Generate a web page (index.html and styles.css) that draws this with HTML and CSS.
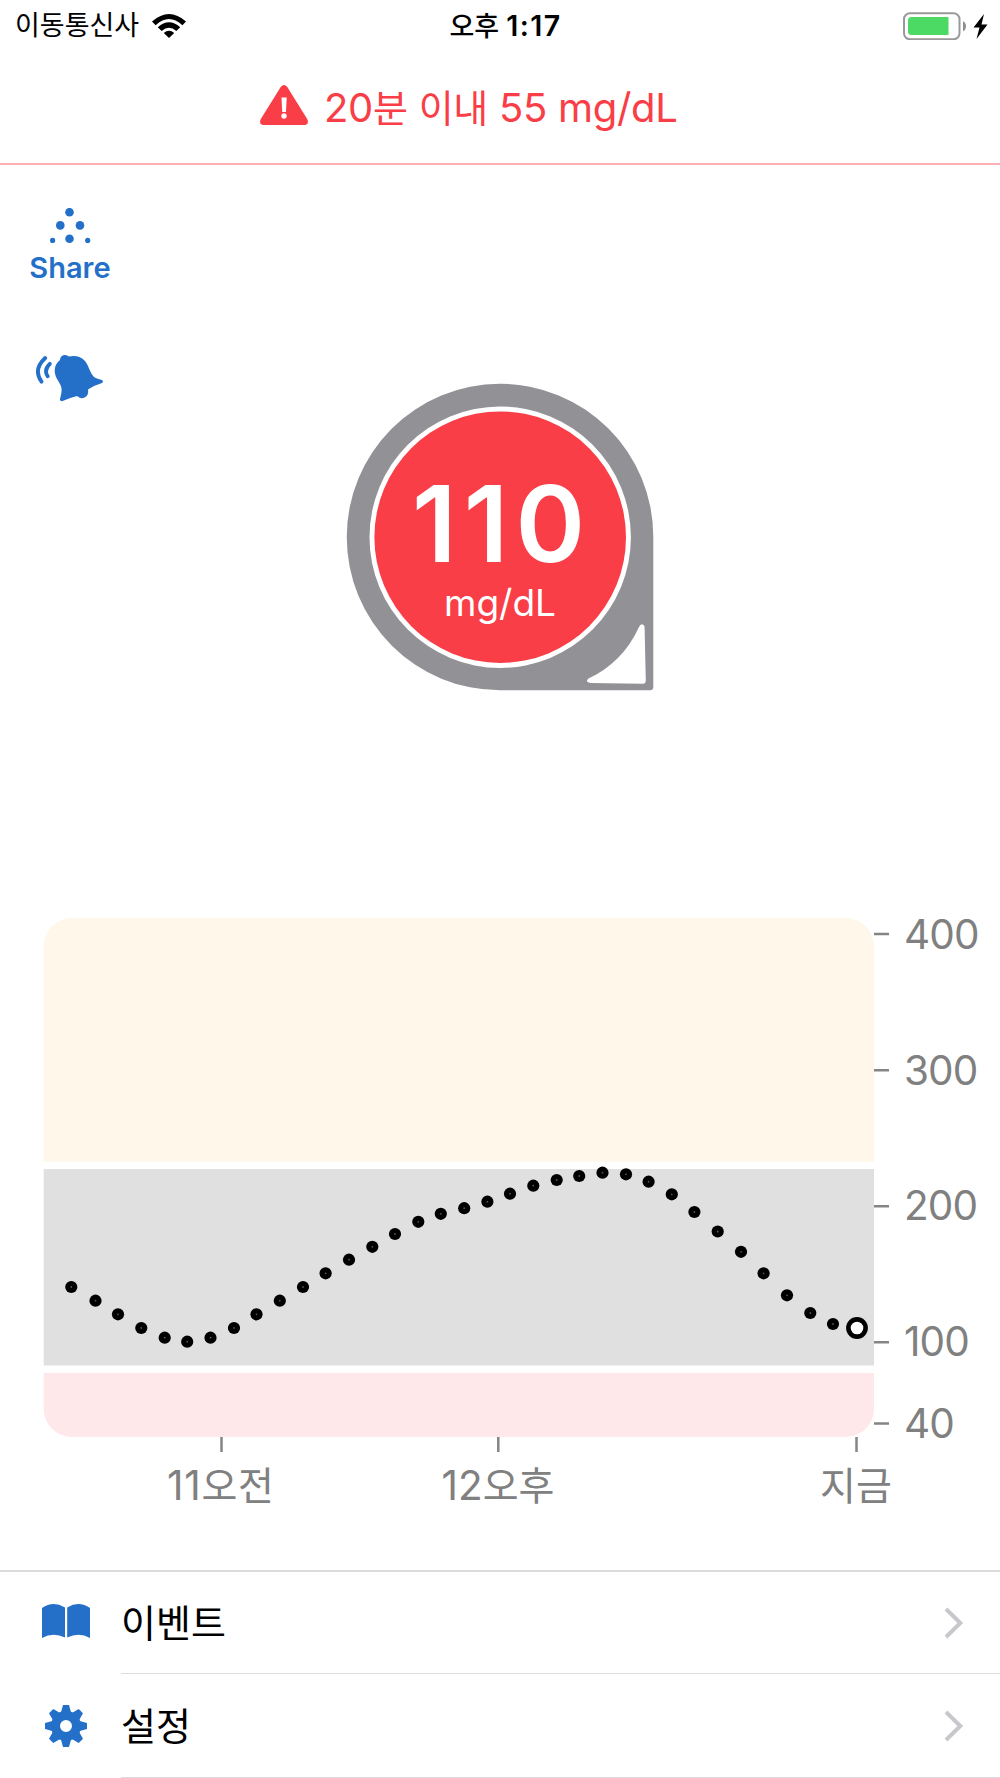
FILE: index.html
```html
<!DOCTYPE html>
<html lang="ko">
<head>
  <meta charset="UTF-8" />
  <meta name="viewport" content="width=device-width, initial-scale=1.0" />
  <title>Glucose</title>
  <link rel="stylesheet" href="styles.css">
</head>
<body>
  <header class="status">
    <div class="carrier">
      <span>이동통신사</span>
      <svg width="34" height="24" viewBox="0 0 34 24">
        <path d="M0 7.5Q17-7.5 34 7.5L30.4 11.2Q17-1 3.6 11.2Z"/>
        <path d="M5.800 13.200Q17 3.500 28.200 13.200L24.400 17Q17 10.500 9.600 17Z"/>
        <path d="M11.800 19Q17 14.500 22.200 19L17 24Z"/>
      </svg>
    </div>
    <div class="time"><span class="ko">오후</span> <span class="clock">1:17</span></div>
    <svg class="battery" width="86" height="28" viewBox="0 0 86 28">
      <rect x="1" y="1.200" width="55.500" height="26" rx="6" fill="none" stroke="#999" stroke-width="2"/>
      <path d="M8.500 5H45.500V23H8.500Q5 23 5 19.500V8.500Q5 5 8.500 5Z" fill="#4cd964"/>
      <path d="M60 9.200Q63 10.500 63 14.200T60 19.200Z" fill="#8e8e8e"/>
      <path d="M81 2L70.500 15.500H76.500L73.500 27L84.500 12.500H78.500Z"/>
    </svg>
  </header>

  <div class="alert">
    <svg width="48" height="40" viewBox="0 0 48 40">
      <path d="M20.700 2Q24-2 27.300 2L47.200 34Q49.500 39.300 44.500 40H3.500Q-1.500 39.300.8 34Z" fill="#f93e47"/>
      <path d="M21.500 12.500H26.700L26 27H22.200Z" fill="#fff"/>
      <circle cx="24" cy="31" r="2.700" fill="#fff"/>
    </svg>
    <p>20<span class="ko">분</span> <span class="ko">이내</span> 55 mg/dL</p>
  </div>

  <main>
    <section class="hero">
      <nav class="actions">
        <a class="share">
          <svg width="42" height="36" viewBox="0 0 42 36">
            <circle cx="20.500" cy="4.200" r="4.300"/>
            <circle cx="11.300" cy="17.400" r="4.300"/>
            <circle cx="31" cy="17.400" r="4.300"/>
            <circle cx="20.500" cy="30.800" r="4.300"/>
            <circle cx="3.600" cy="32.400" r="2.600"/>
            <circle cx="38.700" cy="32.400" r="2.600"/>
          </svg>
          <span>Share</span>
        </a>
        <svg class="bell" width="68" height="48" viewBox="0 0 68 48">
          <path d="M10.200 4Q-2.200 15.500 6.500 27.700M14.800 9.800Q8.400 16.200 12.700 22.300" fill="none" stroke="#2470c9" stroke-width="3.800" stroke-linecap="round"/>
          <path d="M25 6Q25 2 29 1Q32 .5 34 2.600Q44 .5 50 7C54 12 55 19 59 23Q61 24.300 67 26Q69 27.500 67 29Q60 31 53 35.500Q54 41 50 43.300Q45.500 45.500 42 42Q34 44 27 47.300Q24.600 47.300 25 45C26.500 39 27.500 35 25.500 31C23 26 20 23 19.700 17Q19.700 10 25 6Z"/>
        </svg>
      </nav>
      <svg class="dial" width="308" height="308" viewBox="0 0 308 308">
        <path d="M154 .8A153 153 0 0 1 307.300 154V303.800Q307.300 307.300 303.800 307.300H154A153 153 0 0 1 154 .8Z" fill="#929196"/>
        <circle cx="154.200" cy="154.200" r="130.700" fill="#fff"/>
        <circle cx="154.200" cy="154.200" r="125.800" fill="#f93e47"/>
        <path d="M293 244Q295 240 297.500 242Q298.600 242.800 298.600 244.500L299.800 297.500Q299.700 300.800 297 300.800L244.500 300Q238.500 298.500 242.500 295.500C264 285.500 282 268.500 293 244Z" fill="#fff"/>
        <text class="value" x="66" y="179" textLength="173">110</text>
        <text class="unit" x="98" y="233" textLength="112">mg/dL</text>
      </svg>
    </section>

    <svg class="chart" width="1000" height="652" viewBox="0 918 1000 652">
      <path d="M43.700 1161.700V946A28 28 0 0 1 71.700 918H846A28 28 0 0 1 874 946V1161.700Z" fill="#fff7e9"/>
      <rect x="43.700" y="1169" width="830.300" height="196.500" fill="#e0e0e0"/>
      <path d="M43.700 1373H874V1409A28 28 0 0 1 846 1437H71.700A28 28 0 0 1 43.700 1409Z" fill="#ffe8ea"/>
      <path class="ticks" d="M874 934H889M874 1070.300H889M874 1206.200H889M874 1342.300H889M874 1423.500H889M221.500 1437V1452M498.300 1437V1452M856.500 1437V1452"/>
      <g class="labels">
        <text x="904" y="948.500">400</text>
        <text x="904" y="1084.500">300</text>
        <text x="904" y="1220">200</text>
        <text x="904" y="1355.500">100</text>
        <text x="904" y="1437.500">40</text>
        <text class="hour" x="167" y="1500" textLength="107">11<tspan class="ko">오전</tspan></text>
        <text class="hour" x="441.500" y="1500">12<tspan class="ko">오후</tspan></text>
        <text class="ko hour" x="820" y="1499.500">지금</text>
      </g>
      <g id="readings"></g>
      <circle cx="857" cy="1328" r="8.600" fill="#fff" stroke="#000" stroke-width="4.600"/>
    </svg>
  </main>

  <nav class="menu">
    <a class="row">
      <svg class="icon book" width="48" height="42" viewBox="0 0 48 42">
        <path d="M0 8Q11 .5 23 7.500V37.500Q11 32 0 38ZM25.200 7.500Q37 .5 48 8V38Q37 32 25.200 37.500Z"/>
      </svg>
      <span class="label"><span>이벤트</span>
        <svg width="20" height="34" viewBox="0 0 20 34"><path d="M2 3L16.300 17L2 31"/></svg>
      </span>
    </a>
    <a class="row">
      <svg class="icon" width="48" height="44" viewBox="-24 -22 48 44">
        <g id="teeth"></g>
        <circle r="10.500" fill="none" stroke="#2470c9" stroke-width="9"/>
      </svg>
      <span class="label"><span>설정</span>
        <svg width="20" height="34" viewBox="0 0 20 34"><path d="M2 3L16.300 17L2 31"/></svg>
      </span>
    </a>
  </nav>

  <script>
    // one reading every five minutes, [x, y]
    const points = [
      [71.3,1287],[95.5,1300.7],[118,1314.3],[141.3,1328],[164.7,1337.7],[187.2,1341.7],
      [210.5,1337.7],[234,1328],[256.5,1314.3],[279.8,1300.7],[303,1287],[325.6,1273.3],
      [349,1259.7],[372.3,1246.8],[395,1234],[418.3,1221.8],[440.8,1213.8],[464.2,1208.2],
      [487.4,1201.7],[510,1193.7],[533.3,1185.7],[556.7,1180],[579.2,1176],[602.5,1172.7],
      [626,1174.3],[648.6,1181.7],[671.8,1194.3],[694.4,1212],[717.7,1231.5],[741,1251.8],
      [763.6,1273.3],[787,1295.3],[810.3,1313],[833,1324]
    ];
    document.getElementById('readings').innerHTML = points.map(([x, y]) =>
      `<circle cx="${x}" cy="${y}" r="6.1"/><circle cx="${x}" cy="${y}" r=".9" fill="#555"/>`).join('');

    document.getElementById('teeth').innerHTML = [0,45,90,135,180,225,270,315].map(a =>
      `<path d="M-5.500 -12L-3 -21H3L5.500 -12Z" transform="rotate(${a})"/>`).join('');
  </script>
</body>
</html>
```
FILE: styles.css
```css
* { box-sizing: border-box; }
body    { margin: 0; background: #fff; color: #000; overflow: hidden;
          font-family: Inter, "Noto Sans CJK KR", sans-serif; }
svg     { display: block; flex: none; }
.ko     { font-family: "Noto Sans CJK KR", sans-serif; }

.status { display: grid; grid-template-columns: 1fr auto 1fr; align-items: center;
          height: 48px; padding: 0 11px 0 15px; }
.carrier { display: flex; align-items: center; gap: 13px;
           font-size: 27px; line-height: 50px; }
.time   { padding-left: 7px; font-size: 28.500px; font-weight: 600; line-height: 50px; white-space: nowrap; }
.time .ko { font-size: 27px; font-weight: 500; }
.clock  { letter-spacing: 1.400px; }
.battery { justify-self: end; }

.alert  { display: flex; gap: 16px; height: 117px; padding: 37px 0 0 260px;
          border-bottom: 2px solid #ffb0b4; color: #f93e47; }
.alert p { margin: 0; font-size: 40px; line-height: 41px; letter-spacing: -.300px; white-space: nowrap; }
.alert .ko { font-size: 38px; }

.hero   { display: grid; grid-template-columns: 140px 1fr 140px; height: 753px; }
.actions { padding-top: 43px; fill: #2470c9; color: #2470c9; }
.share  { display: flex; flex-direction: column; align-items: center; gap: 6px;
          font-size: 29px; font-weight: 600; line-height: 36px; }
.bell   { margin: 68px 0 0 35px; }
.dial   { margin: 218px auto 0; fill: #fff; }
.value  { font-size: 105.500px; font-weight: 600; }
.unit   { font-size: 37px; }

.ticks  { stroke: #858585; stroke-width: 2.500; }
.labels { fill: #808080; font-size: 40.500px; letter-spacing: -.900px; }
.labels .hour { letter-spacing: 0; }
.labels .ko { font-size: 39px; }

.menu   { border-top: 2px solid #dcdcde; }
.row    { display: flex; align-items: center; height: 102px; padding-left: 42px; }
.row + .row { height: 104px; }
.icon   { fill: #2470c9; margin-right: 31px; }
.book   { margin-bottom: 5px; }
.label  { flex: 1; display: flex; align-items: center; justify-content: space-between;
          height: 100%; padding-right: 36px; border-bottom: 1px solid #dcdcde;
          font-family: "Noto Sans CJK KR", sans-serif; font-size: 38px; }
.label span { padding-bottom: 5px; }
.label svg { fill: none; stroke: #c7c7cc; stroke-width: 4; }
```
